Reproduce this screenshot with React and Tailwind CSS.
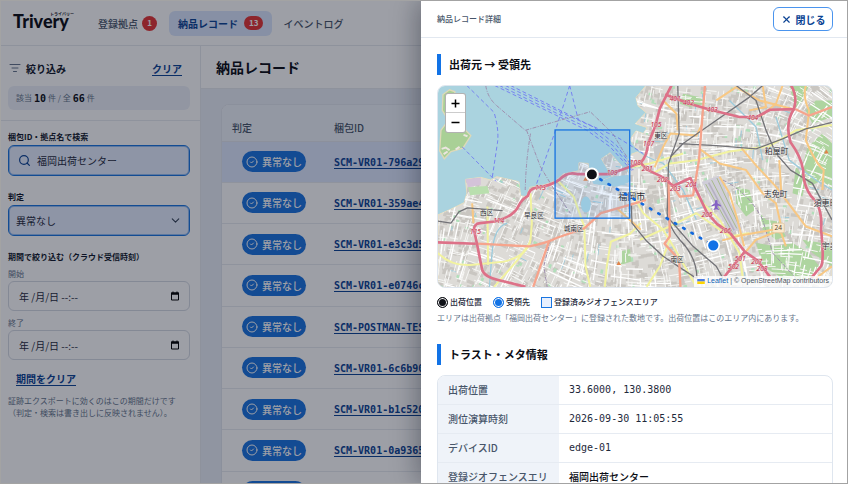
import { Search, ChevronDown, CircleCheck, X, ListFilter } from "lucide-react";

const RECORDS = [
  "SCM-VR01-796a293e",
  "SCM-VR01-359ae4c1",
  "SCM-VR01-e3c3d51b",
  "SCM-VR01-e0746cc2",
  "SCM-POSTMAN-TEST-01",
  "SCM-VR01-6c6b903d",
  "SCM-VR01-b1c5207a",
  "SCM-VR01-0a93651f",
  "SCM-VR01-77d2b4e0",
];

const META = [
  { label: "出荷位置", value: "33.6000, 130.3800", mono: true },
  { label: "測位演算時刻", value: "2026-09-30 11:05:55", mono: true },
  { label: "デバイスID", value: "edge-01", mono: true },
  { label: "登録ジオフェンスエリア", value: "福岡出荷センター", mono: false },
];

const LAND =
  "M21 405 L60 388 L100 368 L108 340 L104 298 L150 292 L180 300 L198 290 L265 305 L270 348 L288 350 L298 322 L340 315 L375 303 L398 282 L446 272 L446 248 L474 250 L478 285 L520 300 L546 290 L514 236 L540 218 L578 262 L598 282 L590 250 L604 222 L626 214 L600 178 L618 152 L640 160 L652 142 L616 130 L648 96 L624 76 L618 52 L648 15 L1209 15 L1209 624 L21 624 Z";

const MOTORWAYS = [
  "M0 487 L135 492",
  "M285 622 L205 602 Q160 592 154 570 L140 500 L130 452 Q128 432 148 430 L192 425 Q250 410 264 378 Q272 360 292 348 Q296 326 318 323 Q366 316 388 298 Q412 274 440 282 L540 282 L590 264 L632 248 Q652 226 654 192 L676 138 L690 84 L712 40 L725 15",
  "M632 248 L650 268 L700 292 L730 318 L782 294 L812 356 L832 398 L862 432 L902 460 L946 516 L984 542 L1022 592",
  "M946 516 L910 560 L884 592",
  "M706 42 L780 70 L842 88 L930 110 L982 110 L1022 88 L1098 86",
  "M1086 15 Q1106 50 1094 86 Q1066 130 1084 186 Q1116 230 1122 270 Q1122 330 1162 366 Q1180 400 1176 450 Q1186 540 1176 560 L1146 596",
];

const TRUNKS = [
  "M140 492 L296 500 Q350 490 380 474 L462 446 L512 400 L602 374 L648 360",
  "M356 484 L308 622",
  "M826 15 L818 110 L808 240 L790 346 L750 350 L724 310",
  "M716 300 L720 470 L704 492 L748 540 L752 622",
  "M1098 86 L1140 106 L1209 80",
];

const SECONDARY = [
  "M21 520 Q60 560 120 556 L220 546 Q290 530 300 480 L304 430 L300 340",
  "M170 380 L172 556",
  "M190 622 L262 540 L300 486",
  "M380 300 L430 350 L462 440 L466 560 L480 622",
  "M632 430 L600 462 L542 486 L530 560 L524 622",
  "M600 330 L640 400 L700 450 L742 520 L800 622",
  "M670 280 L720 250 L800 240 L900 214 L1020 198 L1100 150 L1209 134",
  "M630 480 L720 440 L800 400 L900 470 L960 460",
  "M606 260 L660 250 L760 220",
  "M800 350 L870 420 L930 520 L940 596",
  "M650 622 L690 560 L720 480",
];

const PRIMARY = [
  "M674 262 L700 200 L722 160 L800 166 L818 130",
  "M700 60 L740 100 L744 150",
  "M810 206 L870 250 L950 270 L1000 340 L1040 370 L1056 440",
  "M936 204 L980 256 L1040 320 L1130 440 L1209 470",
  "M1000 15 L1010 80 L960 90",
  "M1130 15 Q1120 50 1140 90 L1130 180 Q1160 250 1184 270 L1180 330",
  "M870 290 L900 340 L924 420 L944 500",
  "M878 482 L930 468 L1030 450 L1056 460 L1070 500",
  "M560 385 L632 450",
  "M124 370 L128 430",
  "M1050 240 L1056 340",
  "M946 520 L980 480 L1040 456",
  "M860 60 L920 20 L990 60 L1090 86",
  "M1160 596 L1209 560",
  "M990 110 L1040 70 L1060 15",
];

const RAILWAYS = [
  "M21 424 L60 430 L84 396 L110 384 L216 392",
  "M744 15 L748 160 L716 250 L712 400 Q716 440 750 480 Q800 530 802 596",
  "M1000 15 L960 50 L880 106 L760 190 L722 230",
  "M748 190 L860 196 L980 206 L1060 176 L1130 146 L1209 126",
  "M920 15 L980 60 L1010 150 L1040 220 L1084 270 L1150 310 L1209 420",
  "M604 370 L606 430 L650 484 L700 530 L760 570 L800 596",
  "M712 410 L790 500 L860 560 L880 596",
];

const FERRIES = [
  "M108 15 L190 96 Q206 150 200 190 L184 296",
  "M94 200 L196 304",
  "M418 15 L404 60 L372 160 L318 312",
  "M418 15 L444 118",
  "M192 15 L380 106 L470 150 L540 200 L606 272",
  "M206 15 L390 104 L480 146 L548 196 L610 270",
  "M224 15 L396 98 L490 140 L560 196 L606 258",
  "M240 15 L410 100 L470 130 L560 170 L640 220",
];

const BOUNDARIES = [
  "M165 15 Q170 50 196 74 L284 150 L480 94 L548 160 L590 230",
  "M288 150 L330 260 L372 330 L420 400",
  "M300 160 Q286 240 284 330",
  "M360 480 L340 560 L350 622",
  "M880 300 Q960 340 1000 420 L1030 520 L1100 596",
];

const RIVERS = [
  "M230 430 Q190 440 184 520 L176 622",
  "M610 200 Q640 230 700 250 L760 330 L800 420",
  "M1040 110 L1080 240 L1160 300 L1209 330",
  "M900 60 L980 140 L1000 240",
];

const WOODS = [
  "M990 398 L1010 420 L1050 426 L1070 470 L1040 480 L1000 450 Z",
  "M980 490 L1040 500 L1090 490 L1140 520 L1170 560 L1150 600 L1060 596 L1000 560 Z",
  "M1120 480 L1180 490 L1209 510 L1209 560 L1150 520 Z",
  "M1136 200 L1180 160 L1209 190 L1209 330 L1180 300 L1140 320 L1120 260 Z",
  "M1130 90 L1160 60 L1209 60 L1209 110 L1150 130 Z",
  "M920 320 L960 330 L976 390 L950 410 L920 370 Z",
  "M1080 15 L1140 15 L1120 60 L1100 90 Z",
  "M576 514 L600 508 L604 546 L560 560 Z",
  "M760 40 L810 50 L830 70 L780 80 L750 70 Z",
  "M1100 260 L1130 300 L1120 350 L1090 340 Z",
];

const ROUTE_NUMBERS = [
  ["113", 330, 330],
  ["114", 204, 430],
  ["115", 134, 464],
  ["109", 546, 286],
  ["108", 616, 256],
  ["201", 652, 274],
  ["202", 698, 307],
  ["203", 736, 334],
  ["204", 784, 320],
  ["205", 832, 412],
  ["206", 888, 460],
  ["207", 982, 552],
  ["208", 998, 574],
  ["501", 932, 544],
  ["502", 912, 568],
  ["107", 656, 198],
  ["105", 678, 140],
  ["401", 736, 62],
  ["402", 776, 74],
  ["403", 848, 96],
  ["404", 970, 118],
];

const PLACES = [
  ["東区", 693, 173, 20],
  ["西区", 168, 406, 20],
  ["早良区", 310, 414, 20],
  ["城南区", 430, 454, 20],
  ["南区", 742, 547, 20],
  ["粕屋町", 1042, 222, 24],
  ["志免町", 1039, 351, 24],
  ["須恵町", 1190, 379, 24],
  ["宇美町", 1214, 508, 24],
  ["福岡市", 605, 361, 27],
];

// small deterministic generator so the street grid is the same on every render
function makeStreets(count, minLen, maxLen, seed) {
  let s = seed;
  const next = () => {
    s = (s * 16807) % 2147483647;
    return s / 2147483647;
  };
  let d = "";
  for (let i = 0; i < count; i++) {
    const x = 20 + next() * 1190;
    const y = 15 + next() * 610;
    const tilt = 0.25 + Math.sin(x / 170) * 0.35 + Math.cos(y / 140) * 0.2;
    const angle = tilt + (next() > 0.5 ? Math.PI / 2 : 0);
    const len = minLen + next() * (maxLen - minLen);
    d += `M${x.toFixed(0)} ${y.toFixed(0)}l${(Math.cos(angle) * len).toFixed(0)} ${(Math.sin(angle) * len).toFixed(0)}`;
  }
  return d;
}

const BLOCKS = makeStreets(1500, 8, 26, 77);
const PARKS = makeStreets(200, 4, 14, 913);
const CREEKS = makeStreets(90, 12, 40, 4021);
const LANES = makeStreets(1500, 14, 50, 31);
const STREETS = makeStreets(200, 50, 120, 505);

function Lines({ paths, ...rest }) {
  return (
    <g fill="none" strokeLinejoin="round" {...rest}>
      {paths.map((d) => (
        <path key={d} d={d} />
      ))}
    </g>
  );
}

function MapDrawing() {
  return (
    <svg
      viewBox="21 15 1188 609"
      preserveAspectRatio="xMidYMid slice"
      className="block h-full w-full"
      role="img"
      aria-label="福岡市周辺の地図"
    >
      <defs>
        <clipPath id="land">
          <path d={LAND} />
        </clipPath>
      </defs>
      <rect x="21" y="15" width="1188" height="609" fill="#aad3df" />
      <path
        d="M36 42 L56 28 L72 34 L70 60 L100 80 L104 150 L120 166 L96 204 L60 214 L40 236 L26 212 L30 150 L52 120 L34 90 Z"
        fill="#a9d096"
        stroke="#ddd9b8"
        strokeWidth="4"
      />
      <path d="M32 206 l12 -4 l12 8 M38 222 l12 -8 M98 164 l12 4 M74 208 l12 -8" fill="none" stroke="#ece6e0" strokeWidth="6" />
      <path d={LAND} fill="#dddbd7" stroke="#e9dfc0" strokeWidth="3" />
      <g clipPath="url(#land)" fill="none">
        <path d={BLOCKS} stroke="#c9c6c1" strokeWidth="10" />
        <path d={PARKS} stroke="#b1dfba" strokeWidth="8" />
        <path d={CREEKS} stroke="#9dcbdc" strokeWidth="3" />
        <g fill="#aed5a0">
          {WOODS.map((d) => (
            <path key={d} d={d} />
          ))}
        </g>
        <path d={LANES} stroke="#f6f6f4" strokeWidth="3" />
        <path d={STREETS} stroke="#ffffff" strokeWidth="4" />
      </g>
      <path d="M104 298 L150 292 L150 314 L112 322 Z" fill="#d4c3d9" />
      <path d="M112 322 L170 318 L176 340 L118 346 Z" fill="#b9dfae" />
      <ellipse cx="467" cy="374" rx="15" ry="24" fill="#a6d3df" />
      <path d="M480 288 L520 300 L546 290 L596 284 L600 306 L560 320 L490 312 Z" fill="#aad3df" />
      <path d="M670 200 L700 190 L700 226 L676 240 Z" fill="#c9c9c9" />
      <path d="M816 306 L868 286 L938 446 L902 462 Z" fill="#cfcdd8" />
      <path
        d="M828 312 L908 456 M846 300 L922 446 M862 294 L930 440"
        stroke="#a7b98b"
        strokeWidth="3"
        fill="none"
      />
      <path d="M837 308 L914 452" stroke="#b5b0c2" strokeWidth="5" />
      <Lines paths={RIVERS} stroke="#9ccbdc" strokeWidth="4" />
      <Lines paths={FERRIES} stroke="#7682f0" strokeWidth="3" strokeDasharray="12 8" />
      <Lines paths={BOUNDARIES} stroke="#9f8fae" strokeWidth="3" strokeDasharray="12 4 3 4" />
      <Lines paths={SECONDARY} stroke="#f2f3a0" strokeWidth="6" />
      <Lines paths={PRIMARY} stroke="#f8c884" strokeWidth="6" />
      <Lines paths={RAILWAYS} stroke="#737378" strokeWidth="4" />
      <Lines paths={TRUNKS} stroke="#f6a48c" strokeWidth="7" />
      <Lines paths={MOTORWAYS} stroke="#dd7188" strokeWidth="8" />
      <path
        d="M860 360 l4 2 v8 l10 6 v4 l-10 -3 v7 l4 3 v3 l-8 -2 l-8 2 v-3 l4 -3 v-7 l-10 3 v-4 l10 -6 v-8 Z"
        fill="#8461c4"
      />
      <g fill="#e0834a">
        <path d="M466 290 l7 12 h-14 Z" />
        <path d="M566 544 l7 12 h-14 Z" />
        <path d="M1192 208 l7 12 h-14 Z" />
      </g>
      <g
        fontFamily="'Noto Sans', sans-serif"
        fontStyle="italic"
        fontSize="20"
        textAnchor="middle"
        fill="#bd2f4a"
        stroke="#f0cfd2"
        strokeWidth="2"
        paintOrder="stroke"
      >
        {ROUTE_NUMBERS.map(([text, x, y]) => (
          <text key={text} x={x} y={y}>
            {text}
          </text>
        ))}
      </g>
      <g
        fontFamily="'Noto Sans CJK JP', sans-serif"
        textAnchor="middle"
        fill="#2b2b31"
        stroke="#f0f0ee"
        strokeWidth="2"
        paintOrder="stroke"
      >
        {PLACES.map(([text, x, y, size]) => (
          <text key={text} x={x} y={y} fontSize={size}>
            {text}
          </text>
        ))}
      </g>
      <rect x="1030" y="430" width="35" height="29" rx="4" fill="#fbe9cd" stroke="#d8bf98" strokeWidth="2" />
      <text x="1047" y="452" fontSize="20" textAnchor="middle" fontFamily="'Noto Sans', sans-serif" fill="#5b4a2f">
        24
      </text>
      <rect x="374" y="149" width="225" height="266" fill="#2f7ff0" fillOpacity="0.1" stroke="#1a75e0" strokeWidth="4" />
      <path d="M485 283 L850 497" stroke="#1268dc" strokeWidth="8" strokeLinecap="round" strokeDasharray="5 24" />
      <circle cx="485" cy="283" r="18" fill="#0f1117" stroke="#fff" strokeWidth="6" />
      <circle cx="851" cy="497" r="18" fill="#1273e6" stroke="#fff" strokeWidth="5" />
    </svg>
  );
}

function CalendarIcon() {
  return (
    <svg viewBox="0 0 10 10" className="h-[10px] w-[10px] shrink-0 text-black" aria-hidden="true">
      <path d="M1.5 2h7v7h-7z" fill="none" stroke="currentColor" strokeWidth="1" />
      <path d="M1 1.5h8v2.2H1zM2.5 .5h1v1.5h-1zM6.5 .5h1v1.5h-1z" fill="currentColor" />
    </svg>
  );
}

function DateField({ id, label, className }) {
  return (
    <div className={className}>
      <label htmlFor={id} className="block text-[8px] leading-[14px] text-[#64748b]">
        {label}
      </label>
      <div className="flex h-[30px] items-center rounded-md border border-[#d5dae3] pr-[9px] pl-[10px]">
        <input
          id={id}
          type="text"
          defaultValue="年 /月/日 --:--"
          className="min-w-0 flex-1 bg-transparent text-[10px] text-[#1e293b] outline-none"
        />
        <CalendarIcon />
      </div>
    </div>
  );
}

function Header() {
  return (
    <header className="flex h-[45px] shrink-0 items-center border-b border-[#e6e9ef] bg-white pl-3">
      <a href="#home" className="flex w-[61px] flex-col pb-2 text-[#0b0d14]">
        <span className="self-end text-[4px] leading-[4px] font-bold">トライバリー</span>
        <span className="font-['Lato',sans-serif] text-[18px] leading-[10px] font-black">Trivery</span>
      </a>
      <nav className="ml-6 flex items-center text-[10px] font-medium text-[#475569]">
        <a href="#sites" className="flex items-center gap-1">
          登録拠点
          <span className="flex h-[15px] w-[15px] items-center justify-center rounded-full bg-[#e53535] text-[8px] font-bold text-white">
            1
          </span>
        </a>
        <a
          href="#records"
          className="ml-3 flex h-[25px] items-center gap-[6px] rounded-md bg-[#dbe7fd] px-[9px] font-bold text-[#0b4394]"
        >
          納品レコード
          <span className="flex h-[14px] items-center rounded-full bg-[#e53535] px-[5px] text-[8px] text-white">13</span>
        </a>
        <a href="#events" className="ml-[11px]">
          イベントログ
        </a>
      </nav>
    </header>
  );
}

function Sidebar() {
  return (
    <aside className="w-[200px] shrink-0 border-r border-[#e6e9ef] bg-white">
      <div className="border-b border-[#e8ebf1] pt-3 pr-[10px] pb-[10px] pl-[7px]">
        <div className="flex h-[20px] items-center pr-2">
          <ListFilter className="h-3 w-[14px] text-[#64748b]" strokeWidth={2} />
          <h2 className="ml-1 text-[10px] font-bold text-[#0f172a]">絞り込み</h2>
          <a href="#clear" className="ml-auto text-[10px] font-bold text-[#0b4394] underline underline-offset-2">
            クリア
          </a>
        </div>
        <p className="mt-2 flex h-[24px] items-center gap-[2px] rounded-md bg-[#edf1f8] px-2 text-[8px] text-[#64748b]">
          該当
          <b className="font-['DejaVu_Sans_Mono',monospace] text-[10px] text-[#0b0d14]">10</b>
          件 / 全
          <b className="font-['DejaVu_Sans_Mono',monospace] text-[10px] text-[#0b0d14]">66</b>件
        </p>
      </div>

      <div className="flex flex-col pt-2 pr-[10px] pl-[7px]">
        <label htmlFor="query" className="text-[8px] leading-4 font-bold text-[#0f172a]">
          梱包ID・拠点名で検索
        </label>
        <div className="flex h-[31px] items-center gap-[6px] rounded-md border border-[#1a75e0] bg-[#e6eeff] px-[9px] ring-1 ring-[#1a75e0]/40 ring-inset">
          <Search className="h-[13px] w-[13px] text-[#0b4394]" strokeWidth={2.2} />
          <input
            id="query"
            type="text"
            defaultValue="福岡出荷センター"
            className="min-w-0 flex-1 bg-transparent text-[10px] text-[#1e293b] outline-none"
          />
        </div>

        <label htmlFor="verdict" className="mt-[13px] text-[8px] leading-4 font-bold text-[#0f172a]">
          判定
        </label>
        <div className="grid items-center">
          <select
            id="verdict"
            className="col-start-1 row-start-1 h-[31px] appearance-none rounded-md border border-[#1a75e0] bg-[#e6eeff] px-[7px] text-[10px] text-[#1e293b] ring-1 ring-[#1a75e0]/40 ring-inset"
          >
            <option>異常なし</option>
            <option>異常あり</option>
          </select>
          <ChevronDown
            className="pointer-events-none col-start-1 row-start-1 mr-2 h-[13px] w-[13px] justify-self-end text-[#334155]"
            strokeWidth={2}
          />
        </div>

        <fieldset>
          <legend className="pt-[13px] text-[8px] leading-4 font-bold text-[#0f172a]">
            期間で絞り込む（クラウド受信時刻）
          </legend>
          <DateField id="from" label="開始" className="mt-[2px]" />
          <DateField id="to" label="終了" className="mt-[5px]" />
        </fieldset>

        <a
          href="#clear-period"
          className="mt-[11px] ml-2 self-start text-[10px] leading-4 font-bold text-[#0b4394] underline underline-offset-2"
        >
          期間をクリア
        </a>
        <p className="mt-2 text-[8px] leading-3 text-[#64748b]">
          証跡エクスポートに効くのはこの期間だけです
          <br />
          （判定・検索は書き出しに反映されません）。
        </p>
      </div>
    </aside>
  );
}

function Records() {
  return (
    <main className="min-w-0 flex-1 bg-[#eaeef7]">
      <div className="flex h-[43px] items-center border-b border-[#e6e9ef] bg-white pl-[15px]">
        <h1 className="text-[14px] font-bold text-[#0b0d14]">納品レコード</h1>
      </div>
      <div className="pt-[15px] pl-5">
        <div className="overflow-hidden rounded-tl-lg border border-[#e1e6ee] bg-white">
          <table className="h-[408px] w-full table-fixed border-collapse text-[10px]">
            <colgroup>
              <col className="w-[102px]" />
              <col />
            </colgroup>
            <thead>
              <tr className="h-[36px] border-b border-[#e3e7ee] bg-[#eff3fa] text-left text-[#475569]">
                <th className="pt-[10px] pl-[10px] font-medium">判定</th>
                <th className="pt-[10px] pl-[10px] font-medium">梱包ID</th>
              </tr>
            </thead>
            <tbody>
              {RECORDS.map((id, i) => (
                <tr
                  key={id}
                  className={i === 0 ? "border-b border-[#e8ebf1] bg-[#dfe9ff]" : "border-b border-[#e8ebf1]"}
                >
                  <td className="pl-5">
                    <span className="flex h-[21px] w-[64px] items-center justify-center gap-1 rounded-full bg-[#1a73e0] font-medium text-white">
                      <CircleCheck className="h-3 w-3" strokeWidth={2} />
                      異常なし
                    </span>
                  </td>
                  <td className="pl-[10px]">
                    <a
                      href={`#${id}`}
                      className="font-['DejaVu_Sans_Mono',monospace] text-[10px] font-bold whitespace-nowrap text-[#0b4394] underline underline-offset-2"
                    >
                      {id}
                    </a>
                  </td>
                </tr>
              ))}
            </tbody>
          </table>
        </div>
      </div>
    </main>
  );
}

function SectionTitle({ children }) {
  return (
    <h2 className="flex h-[21px] items-center border-l-4 border-[#1273e6] pl-2 text-[11px] font-bold text-[#0b0d14]">
      {children}
    </h2>
  );
}

function Drawer() {
  return (
    <section
      role="dialog"
      aria-label="納品レコード詳細"
      className="flex w-[426px] max-w-full flex-col bg-white shadow-[-4px_0_24px_rgba(10,15,30,0.35)]"
    >
      <div className="flex h-[37px] shrink-0 items-center justify-between border-b border-[#e2e8f0] pr-[14px] pl-4">
        <p className="text-[8px] font-medium text-[#475569]">納品レコード詳細</p>
        <button
          type="button"
          className="flex h-[24px] w-[60px] items-center justify-center gap-1 rounded-md border border-[#4a94ee] text-[10px] font-bold text-[#0b4394]"
        >
          <X className="h-[11px] w-[11px]" strokeWidth={2.5} />
          閉じる
        </button>
      </div>

      <div className="min-h-0 flex-1 overflow-hidden pt-4 pr-[14px] pl-4">
        <SectionTitle>出荷元 → 受領先</SectionTitle>

        <div className="relative mt-[10px] h-[203px] overflow-hidden rounded-lg border border-[#dfe6ef]">
          <MapDrawing />
          <div className="absolute top-[7px] left-[7px] flex w-[21px] flex-col overflow-hidden rounded-[3px] border border-black/30 bg-white">
            <button type="button" aria-label="拡大" className="flex h-[19px] items-center justify-center border-b border-[#ccc]">
              <svg viewBox="0 0 9 9" className="h-[9px] w-[9px]">
                <path d="M.5 4.5h8M4.5 .5v8" stroke="#000" strokeWidth="1.5" />
              </svg>
            </button>
            <button type="button" aria-label="縮小" className="flex h-[19px] items-center justify-center">
              <svg viewBox="0 0 9 9" className="h-[9px] w-[9px]">
                <path d="M.5 4.5h8" stroke="#000" strokeWidth="1.5" />
              </svg>
            </button>
          </div>
          <p className="absolute right-0 bottom-0 flex h-[11px] items-center gap-[2px] bg-white/80 px-[3px] font-['Liberation_Sans',sans-serif] text-[7px] text-[#4b5563]">
            <svg viewBox="0 0 12 8" className="h-[5px] w-2">
              <path fill="#4c7be1" d="M0 0h12v4H0z" />
              <path fill="#ffd500" d="M0 4h12v4H0z" />
            </svg>
            <a href="#leaflet" className="text-[#0b5fb5]">
              Leaflet
            </a>
            | © OpenStreetMap contributors
          </p>
        </div>

        <ul className="mt-2 flex h-3 items-center gap-[11px] text-[8px] font-medium text-[#1e293b]">
          <li className="flex items-center gap-[2px]">
            <span className="h-[11px] w-[11px] rounded-full border border-[#0f1117] bg-[#0f1117] ring-1 ring-white ring-inset" />
            出荷位置
          </li>
          <li className="flex items-center gap-[2px]">
            <span className="h-[11px] w-[11px] rounded-full border border-[#1273e6] bg-[#1273e6] ring-1 ring-white ring-inset" />
            受領先
          </li>
          <li className="flex items-center gap-[2px]">
            <span className="h-[11px] w-[11px] border border-[#1a75e0] bg-[#e8f0fe]" />
            登録済みジオフェンスエリア
          </li>
        </ul>
        <p className="mt-1 text-[8px] leading-3 text-[#64748b]">
          エリアは出荷拠点「福岡出荷センター」に登録された敷地です。出荷位置はこのエリア内にあります。
        </p>

        <div className="mt-5">
          <SectionTitle>トラスト・メタ情報</SectionTitle>
        </div>
        <div className="mt-[10px] overflow-hidden rounded-lg border border-[#dfe6ef]">
          <table className="w-full table-fixed border-collapse text-[10px] leading-[14px]">
            <tbody>
              {META.map((row) => (
                <tr key={row.label} className="border-b border-[#e6ebf2] align-top">
                  <th className="w-[121px] bg-[#eff3f9] py-[7px] pr-2 pl-[10px] text-left font-medium break-all text-[#475569]">
                    {row.label}
                  </th>
                  <td
                    className={
                      row.mono
                        ? "px-[10px] py-[7px] font-['DejaVu_Sans_Mono',monospace] text-[#1e293b]"
                        : "px-[10px] py-[7px] font-medium text-[#0b0d14]"
                    }
                  >
                    {row.value}
                  </td>
                </tr>
              ))}
            </tbody>
          </table>
        </div>
      </div>
    </section>
  );
}

export default function App() {
  return (
    <div
      lang="ja"
      className="relative flex h-screen flex-col overflow-hidden border border-[#a3a3a3] font-['Noto_Sans_CJK_JP',sans-serif]"
    >
      <Header />
      <div className="flex min-h-0 flex-1">
        <Sidebar />
        <Records />
      </div>
      <div className="absolute inset-0 flex justify-end bg-[#0b1020]/40">
        <Drawer />
      </div>
    </div>
  );
}
